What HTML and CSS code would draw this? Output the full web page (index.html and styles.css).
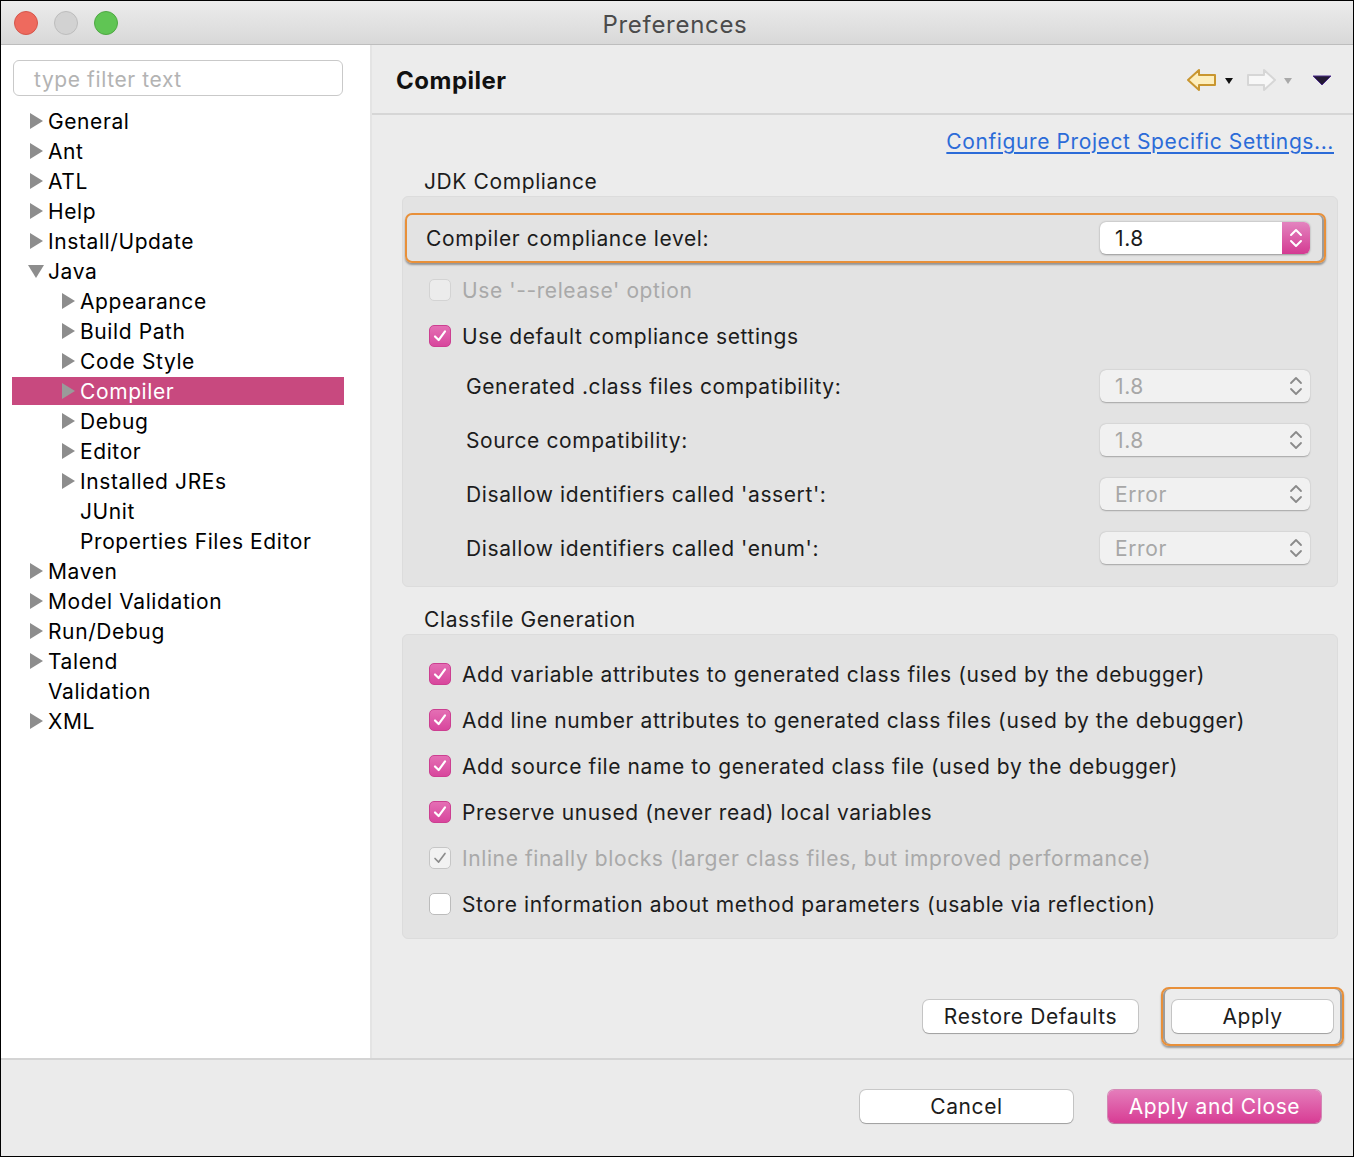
FILE: index.html
```html
<!DOCTYPE html>
<html>
<head>
<meta charset="utf-8">
<link rel="stylesheet" href="styles.css">
</head>
<body>
<div class="window">
  <div class="titlebar">
    <div class="lights">
      <span class="light red"></span>
      <span class="light gray"></span>
      <span class="light green"></span>
    </div>
    <div class="title">Preferences</div>
  </div>
  <div class="main">
    <div class="leftpane">
      <div class="filter">type filter text</div>
      <ul class="tree">
        <li class="row l0"><span class="tri"></span>General</li>
        <li class="row l0"><span class="tri"></span>Ant</li>
        <li class="row l0"><span class="tri"></span>ATL</li>
        <li class="row l0"><span class="tri"></span>Help</li>
        <li class="row l0"><span class="tri"></span>Install/Update</li>
        <li class="row l0"><span class="tri open"></span>Java</li>
        <li class="row l1"><span class="tri"></span>Appearance</li>
        <li class="row l1"><span class="tri"></span>Build Path</li>
        <li class="row l1"><span class="tri"></span>Code Style</li>
        <li class="row l1 selected"><span class="tri"></span>Compiler</li>
        <li class="row l1"><span class="tri"></span>Debug</li>
        <li class="row l1"><span class="tri"></span>Editor</li>
        <li class="row l1"><span class="tri"></span>Installed JREs</li>
        <li class="row l1"><span class="tri none"></span>JUnit</li>
        <li class="row l1"><span class="tri none"></span>Properties Files Editor</li>
        <li class="row l0"><span class="tri"></span>Maven</li>
        <li class="row l0"><span class="tri"></span>Model Validation</li>
        <li class="row l0"><span class="tri"></span>Run/Debug</li>
        <li class="row l0"><span class="tri"></span>Talend</li>
        <li class="row l0"><span class="tri none"></span>Validation</li>
        <li class="row l0"><span class="tri"></span>XML</li>
      </ul>
    </div>
    <div class="rightpane">
      <div class="header">
        <div class="htitle">Compiler</div>
        <div class="nav">
          <svg class="arrow" width="32" height="26" viewBox="0 0 32 26"><path d="M2 13 L13 3 L13 8 L29 8 L29 18 L13 18 L13 23 Z" fill="#fdeebd" stroke="#c9962f" stroke-width="2" stroke-linejoin="round"/></svg>
          <svg class="dd" width="10" height="8" viewBox="0 0 10 8"><path d="M1 1 L9 1 L5 7 Z" fill="#111"/></svg>
          <svg class="arrow fwd" width="32" height="26" viewBox="0 0 32 26"><path d="M30 13 L19 3 L19 8 L3 8 L3 18 L19 18 L19 23 Z" fill="#f7f7f7" stroke="#d6d6d6" stroke-width="2" stroke-linejoin="round"/></svg>
          <svg class="dd" width="10" height="8" viewBox="0 0 10 8"><path d="M1 1 L9 1 L5 7 Z" fill="#a9a9a9"/></svg>
          <svg class="menu" width="20" height="11" viewBox="0 0 20 11"><path d="M1 1 L19 1 L10 10 Z" fill="#231a33" stroke="#4b2a8a" stroke-width="1" stroke-linejoin="round"/></svg>
        </div>
      </div>
      <div class="content">
        <div class="linkrow"><a class="link">Configure Project Specific Settings...</a></div>
        <div class="glabel first">JDK Compliance</div>
        <div class="group jdk">
          <div class="focusrow">
            <span class="label">Compiler compliance level:</span>
            <div class="combo active">
              <span class="cval">1.8</span>
              <span class="stepper"><svg width="16" height="26" viewBox="0 0 16 26"><path d="M3 10 L8 5 L13 10 M3 16 L8 21 L13 16" fill="none" stroke="#fff" stroke-width="2" stroke-linecap="round" stroke-linejoin="round"/></svg></span>
            </div>
          </div>
          <div class="cbrow disabled"><span class="cb"></span>Use '--release' option</div>
          <div class="cbrow"><span class="cb on"><svg width="22" height="22" viewBox="0 0 22 22"><path d="M5.5 11.5 L9.5 15.5 L16.5 6" fill="none" stroke="#fff" stroke-width="2.4" stroke-linecap="round" stroke-linejoin="round"/></svg></span>Use default compliance settings</div>
          <div class="crow"><span class="label">Generated .class files compatibility:</span>
            <div class="combo dis"><span class="cval">1.8</span><span class="chev"><svg width="16" height="26" viewBox="0 0 16 26"><path d="M3 10 L8 5 L13 10 M3 16 L8 21 L13 16" fill="none" stroke="#8a8a8a" stroke-width="1.8" stroke-linecap="round" stroke-linejoin="round"/></svg></span></div></div>
          <div class="crow"><span class="label">Source compatibility:</span>
            <div class="combo dis"><span class="cval">1.8</span><span class="chev"><svg width="16" height="26" viewBox="0 0 16 26"><path d="M3 10 L8 5 L13 10 M3 16 L8 21 L13 16" fill="none" stroke="#8a8a8a" stroke-width="1.8" stroke-linecap="round" stroke-linejoin="round"/></svg></span></div></div>
          <div class="crow"><span class="label">Disallow identifiers called 'assert':</span>
            <div class="combo dis"><span class="cval">Error</span><span class="chev"><svg width="16" height="26" viewBox="0 0 16 26"><path d="M3 10 L8 5 L13 10 M3 16 L8 21 L13 16" fill="none" stroke="#8a8a8a" stroke-width="1.8" stroke-linecap="round" stroke-linejoin="round"/></svg></span></div></div>
          <div class="crow"><span class="label">Disallow identifiers called 'enum':</span>
            <div class="combo dis"><span class="cval">Error</span><span class="chev"><svg width="16" height="26" viewBox="0 0 16 26"><path d="M3 10 L8 5 L13 10 M3 16 L8 21 L13 16" fill="none" stroke="#8a8a8a" stroke-width="1.8" stroke-linecap="round" stroke-linejoin="round"/></svg></span></div></div>
        </div>
        <div class="glabel second">Classfile Generation</div>
        <div class="group cls">
          <div class="cbrow"><span class="cb on"><svg width="22" height="22" viewBox="0 0 22 22"><path d="M5.5 11.5 L9.5 15.5 L16.5 6" fill="none" stroke="#fff" stroke-width="2.4" stroke-linecap="round" stroke-linejoin="round"/></svg></span>Add variable attributes to generated class files (used by the debugger)</div>
          <div class="cbrow"><span class="cb on"><svg width="22" height="22" viewBox="0 0 22 22"><path d="M5.5 11.5 L9.5 15.5 L16.5 6" fill="none" stroke="#fff" stroke-width="2.4" stroke-linecap="round" stroke-linejoin="round"/></svg></span>Add line number attributes to generated class files (used by the debugger)</div>
          <div class="cbrow"><span class="cb on"><svg width="22" height="22" viewBox="0 0 22 22"><path d="M5.5 11.5 L9.5 15.5 L16.5 6" fill="none" stroke="#fff" stroke-width="2.4" stroke-linecap="round" stroke-linejoin="round"/></svg></span>Add source file name to generated class file (used by the debugger)</div>
          <div class="cbrow"><span class="cb on"><svg width="22" height="22" viewBox="0 0 22 22"><path d="M5.5 11.5 L9.5 15.5 L16.5 6" fill="none" stroke="#fff" stroke-width="2.4" stroke-linecap="round" stroke-linejoin="round"/></svg></span>Preserve unused (never read) local variables</div>
          <div class="cbrow disabled"><span class="cb donly"><svg width="22" height="22" viewBox="0 0 22 22"><path d="M5.5 11.5 L9.5 15.5 L16.5 6" fill="none" stroke="#8c8c8c" stroke-width="1.8" stroke-linecap="round" stroke-linejoin="round"/></svg></span>Inline finally blocks (larger class files, but improved performance)</div>
          <div class="cbrow"><span class="cb"></span>Store information about method parameters (usable via reflection)</div>
        </div>
        <div class="btnrow">
          <button class="btn restore">Restore Defaults</button>
          <span class="focusring"><button class="btn apply">Apply</button></span>
        </div>
      </div>
    </div>
  </div>
  <div class="bottombar">
    <button class="btn cancel">Cancel</button>
    <button class="btn primary">Apply and Close</button>
  </div>
</div>
</body>
</html>
```

FILE: styles.css
```css
* { box-sizing: border-box; }
html, body { margin: 0; padding: 0; background: #fff; }
body { font-family: Inter, "Noto Sans", "Liberation Sans", sans-serif; font-size: 21px; letter-spacing: 0.6px; color: #1c1c1c; }

.window {
  width: 1354px; height: 1157px;
  border: 1px solid #000;
  display: flex; flex-direction: column;
  overflow: hidden;
}

.titlebar {
  height: 44px; flex: none;
  background: linear-gradient(#ececec, #d8d8d8);
  border-bottom: 1px solid #bdbdbd;
  display: flex; align-items: center;
  position: relative;
}
.lights { display: flex; gap: 16px; padding-left: 13px; }
.light { width: 24px; height: 24px; border-radius: 50%; display: block; }
.light.red { background: #ee6a5e; border: 1px solid #d5564b; }
.light.gray { background: #d2d2d2; border: 1px solid #bdbdbd; }
.light.green { background: #60c554; border: 1px solid #4ea843; }
.title {
  position: absolute; left: 0; right: 0; top: 0; bottom: 0;
  display: flex; align-items: center; justify-content: center;
  padding-top: 3px; padding-right: 4px;
  font-size: 24px; color: #4b4b4b; letter-spacing: 0.7px;
}

.main { flex: 1; display: flex; min-height: 0; border-bottom: 2px solid #d4d4d4; }

.leftpane {
  width: 371px; flex: none; background: #fff;
  border-right: 2px solid #e4e4e4;
  padding-top: 15px;
}
.filter {
  margin-left: 12px; width: 330px; height: 36px;
  border: 1px solid #c9c9c9; border-radius: 6px;
  color: #b3b3b3; font-size: 21px;
  display: flex; align-items: center; padding: 2px 0 0 20px;
}
.tree { list-style: none; margin: 11px 0 0 11px; padding: 0; width: 332px; }
.row {
  height: 28px; margin: 2px 0 0 0; display: flex; align-items: center;
  color: #000; font-size: 21px; white-space: nowrap;
}
.row:first-child { margin-top: 1px; }
.row.l0 { padding-left: 18px; }
.row.l1 { padding-left: 50px; }
.row.selected { background: #c8497f; color: #fff; }
.tri {
  width: 0; height: 0; flex: none;
  border-top: 8px solid transparent; border-bottom: 8px solid transparent;
  border-left: 13px solid #8d8d8d;
  margin-right: 5px;
}
.tri.open {
  border-left: 8px solid transparent; border-right: 8px solid transparent;
  border-top: 13px solid #8d8d8d; border-bottom: 0;
  margin-left: -2px; margin-right: 4px;
}
.tri.none { border-color: transparent; }
.row.selected .tri { border-left-color: #9a9a9a; }

.rightpane { flex: 1; background: #ececec; display: flex; flex-direction: column; }
.header {
  height: 70px; flex: none; border-bottom: 2px solid #d6d6d6;
  display: flex; align-items: center; justify-content: space-between;
  padding: 2px 21px 0 24px;
}
.htitle { font-weight: 700; font-size: 24px; color: #111; letter-spacing: 0.5px; }
.nav { display: flex; align-items: center; }
.nav .arrow { display: block; }
.nav .dd { display: block; margin: 2px 11px 0 6px; }
.nav .menu { display: block; margin-left: 8px; }

.content { flex: 1; display: flex; flex-direction: column; padding: 0 15px 12px 30px; }
.linkrow { text-align: right; padding-top: 14px; padding-right: 4px; line-height: 26px; }
.link { color: #2b6bd8; text-decoration: underline; text-underline-offset: 3px; font-size: 21px; }
.glabel { line-height: 26px; padding-left: 22px; color: #1c1c1c; }
.glabel.first { margin-top: 14px; }
.glabel.second { margin-top: 20px; }
.group {
  margin-top: 1px;
  background: #e3e3e3; border: 1px solid #dcdcdc; border-radius: 6px;
}
.group.jdk { padding: 16px 0 11px 0; }
.group.cls { padding: 16px 0 11px 0; }

.focusrow {
  margin: 0 11px 0 2px; height: 50px;
  border: 2px solid #e8903a; border-radius: 7px;
  box-shadow: 0 2px 2px rgba(0,0,0,0.35), inset -2px 0 0 #9c9c9c;
  display: flex; align-items: center; justify-content: space-between;
  padding: 0 14px 0 19px;
  margin-bottom: 4px;
}
.label { white-space: nowrap; }

.combo {
  width: 210px; height: 32px; border-radius: 6px;
  display: flex; align-items: center; justify-content: space-between;
  overflow: hidden;
}
.combo .cval { padding-left: 15px; }
.combo.active { background: #fff; box-shadow: 0 0.5px 2px rgba(0,0,0,0.35); color: #1c1c1c; }
.stepper {
  width: 28px; height: 32px;
  background: linear-gradient(#e384bf, #d43a92);
  display: flex; align-items: center; justify-content: center;
}
.stepper svg, .chev svg { display: block; }
.combo.dis { background: #f1f1f1; box-shadow: 0 0.5px 1.5px rgba(0,0,0,0.28); color: #a7a7a7; }
.chev { width: 28px; display: flex; justify-content: center; }

.cbrow {
  height: 46px; display: flex; align-items: center;
  padding-left: 26px; white-space: nowrap;
}
.cbrow.disabled { color: #a9a9a9; }
.cb {
  width: 22px; height: 22px; flex: none; margin-right: 11px;
  border-radius: 5px; background: #fff;
  border: 1px solid #bcbcbc;
  display: flex; align-items: center; justify-content: center;
}
.cb svg { display: block; }
.cbrow.disabled .cb { background: #ececec; border-color: #d3d3d3; }
.cb.on { background: linear-gradient(#e46fb4, #d8469d); border: 1px solid #cc3f91; }
.cbrow.disabled .cb.donly { background: #f2f2f2; border-color: #c6c6c6; }

.crow {
  height: 54px; display: flex; align-items: center; justify-content: space-between;
  padding: 0 27px 0 63px;
}

.btnrow { margin-top: auto; display: flex; justify-content: flex-end; align-items: center; padding-right: 9px; margin-right: -15px; }
.btn {
  font-family: inherit; font-size: 21px; letter-spacing: 0.6px; color: #1c1c1c;
  background: #fff; border: none; border-radius: 6px;
  box-shadow: 0 0 0 1px rgba(0,0,0,0.15), 0 1px 1px rgba(0,0,0,0.2);
  height: 33px; padding: 0; cursor: default;
}
.btn.restore { width: 215px; margin-right: 23px; }
.focusring {
  display: flex; padding: 11px 9px 11px 9px;
  border: 2px solid #e8903a; border-radius: 8px;
  box-shadow: 0 2px 2px rgba(0,0,0,0.35), inset -2px 0 0 #9c9c9c, inset 2px 0 0 #9c9c9c;
}
.btn.apply { width: 161px; }

.bottombar {
  flex: none; height: 96px; background: #ebebeb;
  display: flex; justify-content: flex-end; align-items: flex-start;
  padding: 30px 32px 0 0;
}
.btn.cancel { width: 213px; margin-right: 35px; }
.btn.primary {
  width: 213px; color: #fff;
  background: linear-gradient(#e47dbb, #d83c94);
  box-shadow: 0 0 0 1px rgba(190,40,130,0.5), 0 1px 1px rgba(0,0,0,0.2);
}
```
